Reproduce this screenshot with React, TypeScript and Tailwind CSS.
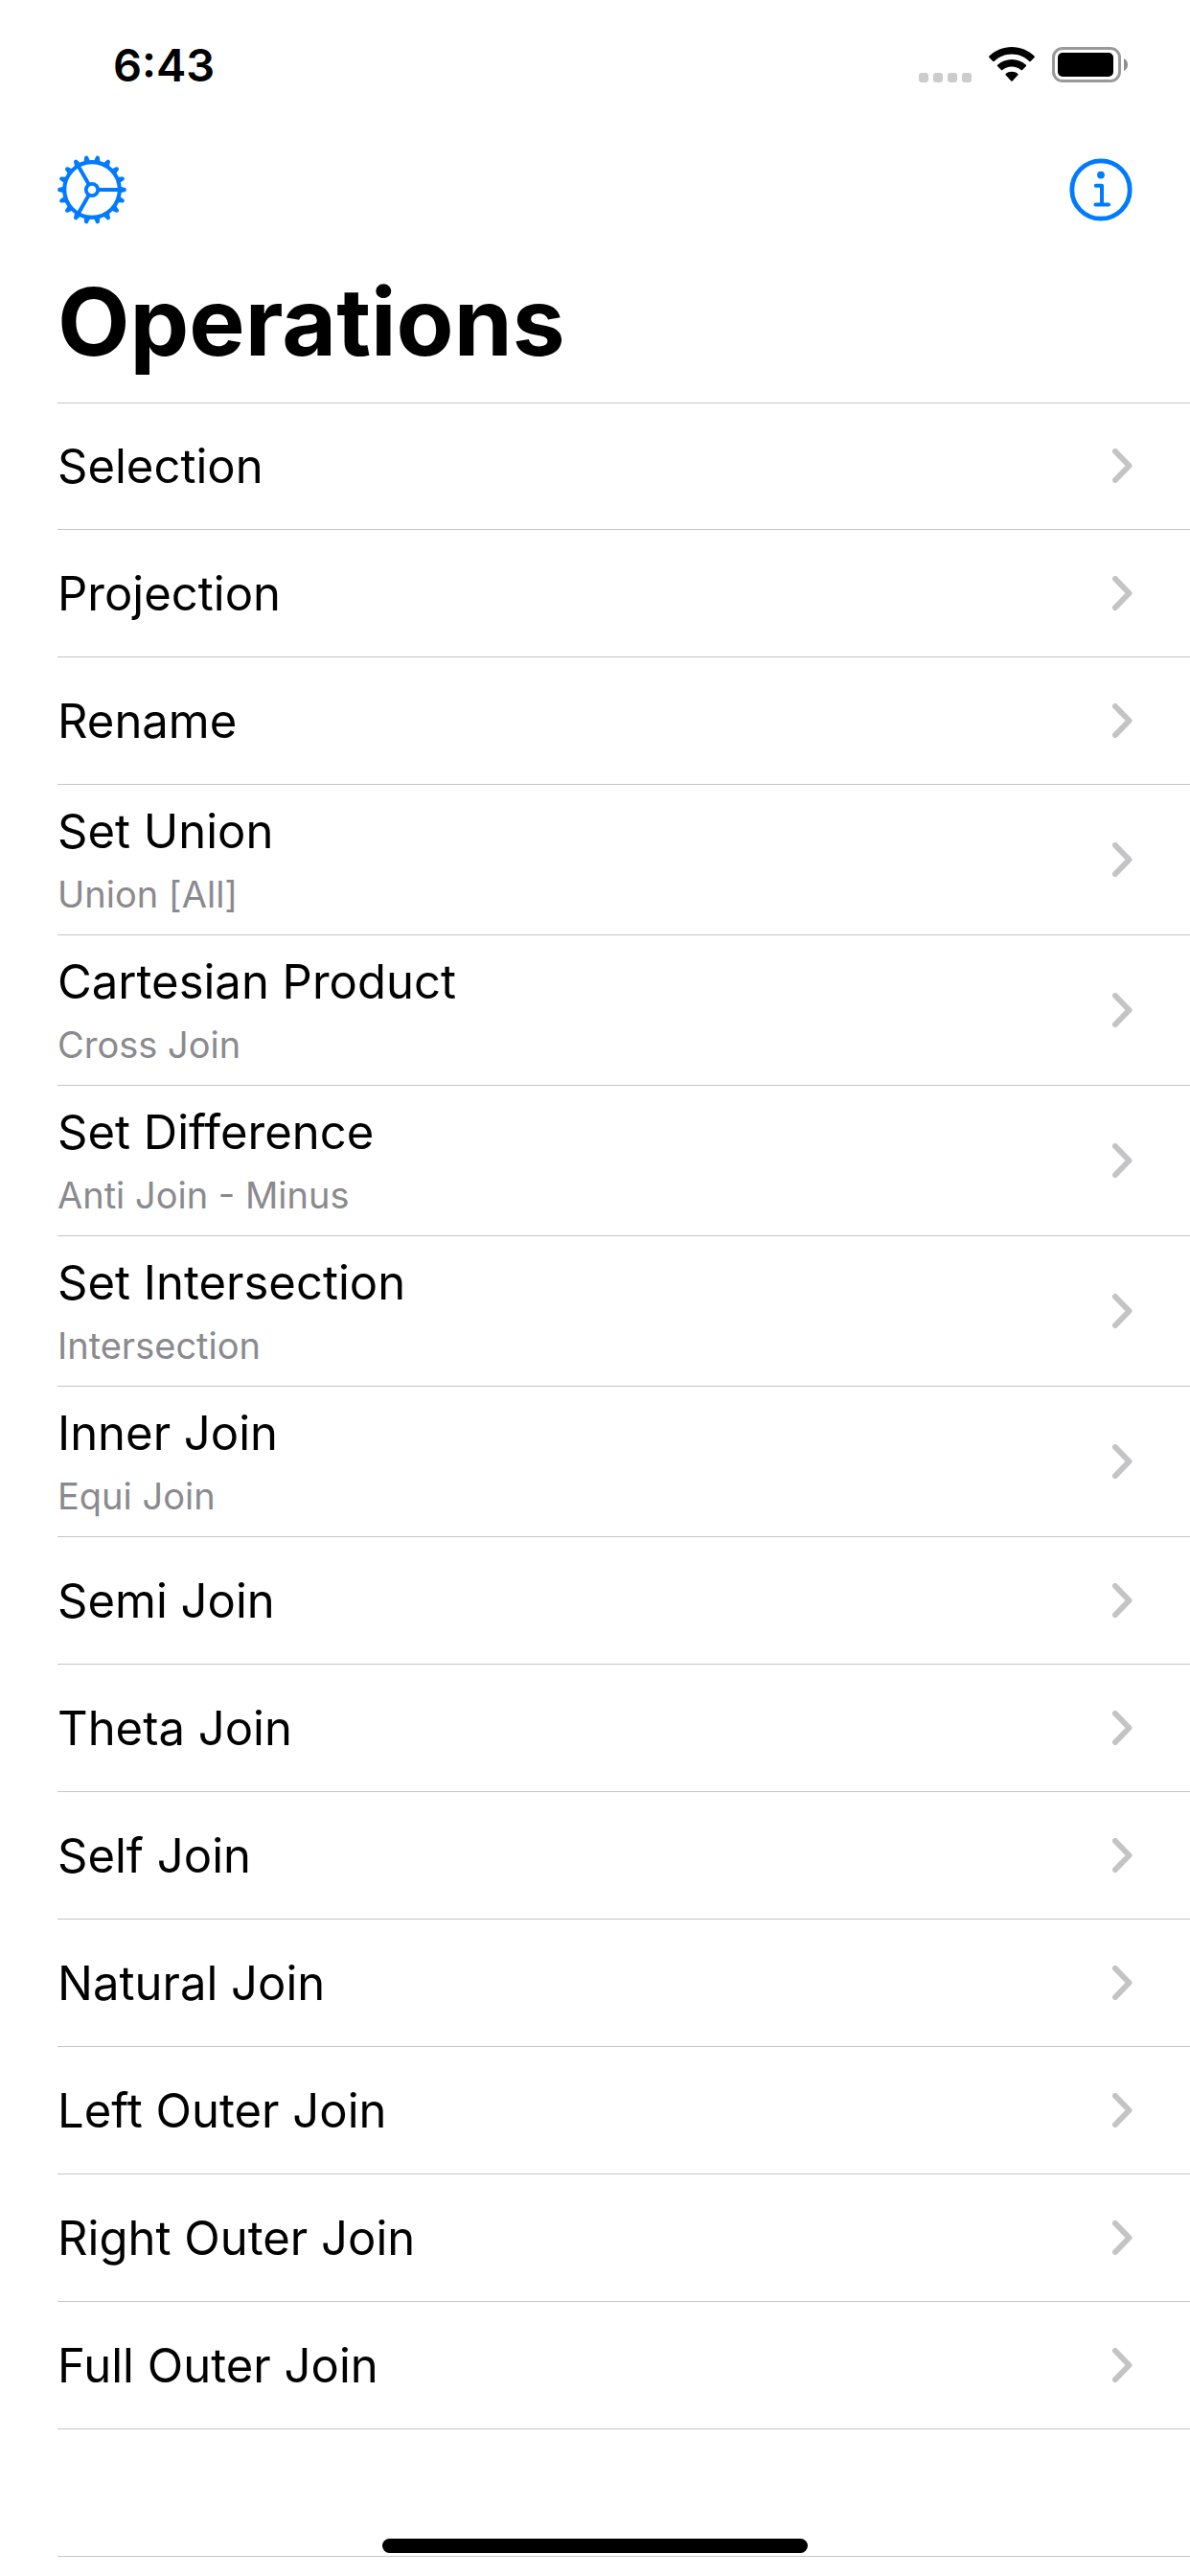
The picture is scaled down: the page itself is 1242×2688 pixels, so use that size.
type Operation = { title: string; subtitle?: string };

const operations: Operation[] = [
  { title: "Selection" },
  { title: "Projection" },
  { title: "Rename" },
  { title: "Set Union", subtitle: "Union [All]" },
  { title: "Cartesian Product", subtitle: "Cross Join" },
  { title: "Set Difference", subtitle: "Anti Join - Minus" },
  { title: "Set Intersection", subtitle: "Intersection" },
  { title: "Inner Join", subtitle: "Equi Join" },
  { title: "Semi Join" },
  { title: "Theta Join" },
  { title: "Self Join" },
  { title: "Natural Join" },
  { title: "Left Outer Join" },
  { title: "Right Outer Join" },
  { title: "Full Outer Join" },
];

const teeth = Array.from({ length: 18 }, (_, i) => i * 20);

function GearIcon() {
  return (
    <svg viewBox="-36 -36 72 72" className="size-[72px]" fill="none" stroke="currentColor" aria-hidden="true">
      <circle r="28.8" strokeWidth="4.2" />
      {teeth.map((angle) => (
        <path
          key={angle}
          d="M30 -3.300 L34.600 -1.900 Q35.900 -1.500 35.900 0 Q35.900 1.500 34.600 1.900 L30 3.300 Z"
          fill="currentColor"
          stroke="none"
          transform={`rotate(${angle})`}
        />
      ))}
      <circle r="6.2" strokeWidth="3.8" />
      {[0, 120, 240].map((angle) => (
        <path key={angle} d="M7 0 H28" strokeWidth="4" transform={`rotate(${angle})`} />
      ))}
    </svg>
  );
}

function InfoIcon() {
  return (
    <svg viewBox="-33 -33 66 66" className="size-[66px]" fill="none" stroke="currentColor" aria-hidden="true">
      <circle r="30.2" strokeWidth="4.8" />
      <circle cy="-15.4" r="3.9" fill="currentColor" stroke="none" />
      <path d="M-5.2 -4.2 H1 V15.6 M-5.5 15.6 H8" strokeWidth="4" strokeLinecap="round" strokeLinejoin="round" />
    </svg>
  );
}

function WifiIcon() {
  return (
    <svg viewBox="0 0 48 37" className="h-[37px] w-12" fill="currentColor" aria-hidden="true">
      <path d="M24 0 C33 0 41.500 3.500 47.600 9.600 Q48.200 10.300 47.600 11 L43.600 15 Q43 15.500 42.300 14.900 C37.300 10.200 31 7.500 24 7.500 C17 7.500 10.700 10.200 5.700 14.900 Q5 15.500 4.400 15 L.4 11 Q-.2 10.300 .4 9.600 C6.500 3.500 15 0 24 0 Z" />
      <path d="M24 13 C29.500 13 34.800 15.100 38.900 18.800 Q39.600 19.500 39 20.100 L35 24.100 Q34.400 24.700 33.700 24.100 C31 21.800 27.600 20.500 24 20.500 C20.400 20.500 17 21.800 14.300 24.100 Q13.600 24.700 13 24.100 L9 20.100 Q8.400 19.500 9.100 18.800 C13.200 15.100 18.500 13 24 13 Z" />
      <path d="M24 25.700 C26.500 25.700 28.600 26.500 30.300 27.900 Q31 28.600 30.400 29.200 L24.700 35.500 Q24 36.200 23.300 35.500 L17.600 29.200 Q17 28.600 17.700 27.900 C19.400 26.500 21.500 25.700 24 25.700 Z" />
    </svg>
  );
}

function BatteryIcon() {
  return (
    <svg viewBox="0 0 80 37" className="h-[37px] w-20" aria-hidden="true">
      <rect x="1.500" y="1.500" width="69" height="34" rx="9.500" fill="none" stroke="#999" strokeWidth="3" />
      <rect x="6" y="6" width="58" height="25" rx="5" fill="#000" />
      <path d="M75 12 Q79 14 79 18.500 Q79 23 75 25 Z" fill="#8e8e8e" />
    </svg>
  );
}

function Chevron() {
  return (
    <svg
      viewBox="0 0 22 36"
      className="h-9 w-[22px] shrink-0 text-[#c4c4c6]"
      fill="none"
      stroke="currentColor"
      strokeWidth="6"
      strokeLinecap="round"
      strokeLinejoin="round"
      aria-hidden="true"
    >
      <path d="M4 3 L18.500 18 L4 33" />
    </svg>
  );
}

function StatusBar() {
  return (
    <div className="flex h-[132px] items-start justify-between pr-16 pl-[118px]">
      <time className="mt-10 text-[47px] leading-[56px] font-semibold">6:43</time>
      <div className="mt-[49px] flex items-end gap-[18px]">
        <div className="flex gap-[5px]">
          {[0, 1, 2, 3].map((dot) => (
            <span key={dot} className="size-[10px] rounded-[3px] bg-[#cccccc]" />
          ))}
        </div>
        <WifiIcon />
        <BatteryIcon />
      </div>
    </div>
  );
}

function Row({ title, subtitle }: Operation) {
  return (
    <li className="ml-[60px] border-b border-[#c6c6c8]">
      <a
        href="#"
        className={
          subtitle
            ? "flex h-[156px] items-center justify-between pr-[60px]"
            : "flex h-[132px] items-center justify-between pr-[60px]"
        }
      >
        <span className="flex flex-col pt-0.5">
          <span className="text-[49px] leading-[70px]">{title}</span>
          {subtitle && <span className="text-[38px] leading-[60px] text-[#8a8a8e]">{subtitle}</span>}
        </span>
        <Chevron />
      </a>
    </li>
  );
}

export default function App() {
  return (
    <div className="min-h-screen bg-white font-['Inter',sans-serif] text-black">
      <StatusBar />
      <header>
        <nav className="flex h-[132px] items-center justify-between px-[60px] text-[#007aff]">
          <button type="button" aria-label="Settings">
            <GearIcon />
          </button>
          <button type="button" aria-label="Information">
            <InfoIcon />
          </button>
        </nav>
        <h1 className="ml-[60px] h-[157px] border-b border-[#c6c6c8] pt-3 text-[98px] leading-[120px] font-bold">
          Operations
        </h1>
      </header>
      <ul className="-mt-px">
        {operations.map((operation) => (
          <Row key={operation.title} {...operation} />
        ))}
        <li className="ml-[60px] h-[133px] border-b border-[#c6c6c8]" aria-hidden="true" />
      </ul>
      <div className="fixed bottom-6 left-1/2 h-[15px] w-[444px] -translate-x-1/2 rounded-full bg-black" />
    </div>
  );
}
